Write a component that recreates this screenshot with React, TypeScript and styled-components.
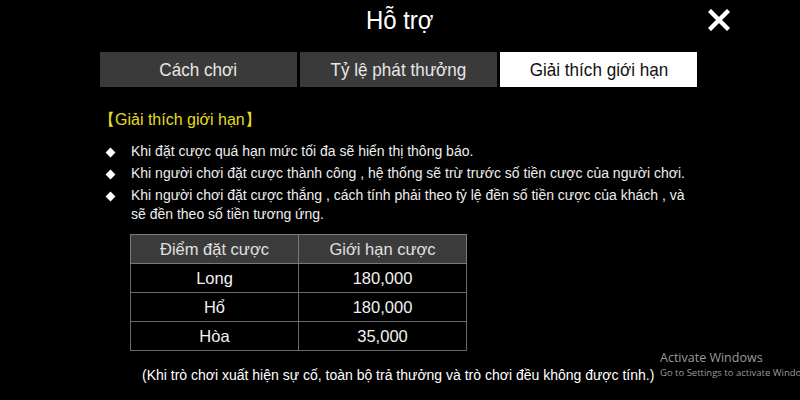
import styled, { createGlobalStyle } from 'styled-components';

const GlobalStyle = createGlobalStyle`
    html, body {
        margin: 0;
        padding: 0;
        background: #000;
    }
    body {
        font-family: "Liberation Sans", Arial, sans-serif;
    }
`;

const Screen = styled.div`
    position: relative;
    width: 800px;
    height: 400px;
    background-color: #000;
    color: #f2f2f2;
    overflow: hidden;
    display: flex;
    flex-direction: column;
`;

const Header = styled.div`
    display: grid;
    grid-template-columns: 1fr auto 1fr;
    align-items: center;
    height: 40px;
`;

const Title = styled.h1`
    grid-column: 2;
    margin: 0;
    font-weight: normal;
    font-size: 26px;
    color: #fff;
    transform: scaleX(0.92);
`;

const CloseButton = styled.button`
    grid-column: 3;
    justify-self: end;
    margin-right: 68px;
    width: 26px;
    height: 26px;
    padding: 0;
    border: none;
    background: transparent;
    cursor: pointer;
    display: flex;
    align-items: center;
    justify-content: center;
`;

const Tabs = styled.div`
    display: grid;
    grid-template-columns: repeat(3, 197px);
    gap: 3px;
    margin: 12px 0 0 100px;
`;

const Tab = styled.div<{ $active?: boolean }>`
    height: 35px;
    display: flex;
    align-items: center;
    justify-content: center;
    background-color: ${(p) => (p.$active ? '#ffffff' : '#3a3a3a')};
    color: ${(p) => (p.$active ? '#111' : '#e6e6e6')};
    font-size: 19px;
`;

const TabLabel = styled.span`
    display: inline-block;
    transform: scaleX(0.9);
`;

const Content = styled.div`
    padding: 23px 0 0 103px;
    display: flex;
    flex-direction: column;
`;

const SectionTitle = styled.div`
    color: #e5dd1c;
    font-size: 16px;
    line-height: 20px;
    margin-left: -4px;
`;

const BulletList = styled.ul`
    list-style: none;
    margin: 12px 0 0 0;
    padding: 0;
    width: 592px;
`;

const BulletItem = styled.li`
    position: relative;
    padding-left: 28px;
    font-size: 14px;
    line-height: 19px;
    color: #eee;
    & + & {
        margin-top: 3px;
    }

    &::before {
        content: '';
        position: absolute;
        left: 4px;
        top: 7px;
        width: 7px;
        height: 7px;
        background: #fff;
        transform: rotate(45deg);
    }
`;

const LimitTable = styled.table`
    margin: 10px 0 0 27px;
    border-collapse: collapse;
    width: 337px;
    border: 1px solid #7a7a7a;
`;

const HeadCell = styled.th`
    background-color: #3b3b3b;
    color: #e0e0e0;
    font-weight: normal;
    font-size: 16.5px;
    height: 28px;
    padding: 0;
    border: 1px solid #7a7a7a;
    width: 50%;
`;

const Cell = styled.td`
    text-align: center;
    font-size: 16.5px;
    height: 28px;
    padding: 0;
    border: 1px solid #6a6a6a;
    color: #f2f2f2;
`;

const Footnote = styled.div`
    margin: 16px 0 0 39px;
    font-size: 14px;
    color: #fff;
`;

const Watermark = styled.div`
    position: absolute;
    left: 660px;
    top: 350px;
    color: #9a9a9a;
    font-family: "Open Sans", "Liberation Sans", sans-serif;
`;

const WatermarkTitle = styled.div`
    font-size: 12.5px;
    line-height: 16px;
`;

const WatermarkSub = styled.div`
    font-size: 9.5px;
    line-height: 13px;
    white-space: nowrap;
`;

const rows = [
    { point: 'Long', limit: '180,000' },
    { point: 'Hổ', limit: '180,000' },
    { point: 'Hòa', limit: '35,000' },
];

const bullets = [
    'Khi đặt cược quá hạn mức tối đa sẽ hiển thị thông báo.',
    'Khi người chơi đặt cược thành công , hệ thống sẽ trừ trước số tiền cược của người chơi.',
    'Khi người chơi đặt cược thắng , cách tính phải theo tỷ lệ đền số tiền cược của khách , và sẽ đền theo số tiền tương ứng.',
];

const tabs = ['Cách chơi', 'Tỷ lệ phát thưởng', 'Giải thích giới hạn'];

export default function App() {
    return (
        <Screen>
            <GlobalStyle />
            <Header>
                <Title>Hỗ trợ</Title>
                <CloseButton aria-label="Đóng">
                    <svg width="22" height="22" viewBox="0 0 22 22">
                        <path
                            d="M3 3 L19 19 M19 3 L3 19"
                            stroke="#fff"
                            strokeWidth="4.4"
                            strokeLinecap="square"
                        />
                    </svg>
                </CloseButton>
            </Header>
            <Tabs>
                {tabs.map((t, i) => (
                    <Tab key={t} $active={i === 2}>
                        <TabLabel>{t}</TabLabel>
                    </Tab>
                ))}
            </Tabs>
            <Content>
                <SectionTitle>【Giải thích giới hạn】</SectionTitle>
                <BulletList>
                    {bullets.map((b) => (
                        <BulletItem key={b}>{b}</BulletItem>
                    ))}
                </BulletList>
                <LimitTable>
                    <thead>
                        <tr>
                            <HeadCell>Điểm đặt cược</HeadCell>
                            <HeadCell>Giới hạn cược</HeadCell>
                        </tr>
                    </thead>
                    <tbody>
                        {rows.map((r) => (
                            <tr key={r.point}>
                                <Cell>{r.point}</Cell>
                                <Cell>{r.limit}</Cell>
                            </tr>
                        ))}
                    </tbody>
                </LimitTable>
                <Footnote>
                    (Khi trò chơi xuất hiện sự cố, toàn bộ trả thưởng và trò chơi đều không được tính.)
                </Footnote>
            </Content>
            <Watermark>
                <WatermarkTitle>Activate Windows</WatermarkTitle>
                <WatermarkSub>Go to Settings to activate Windows.</WatermarkSub>
            </Watermark>
        </Screen>
    );
}
